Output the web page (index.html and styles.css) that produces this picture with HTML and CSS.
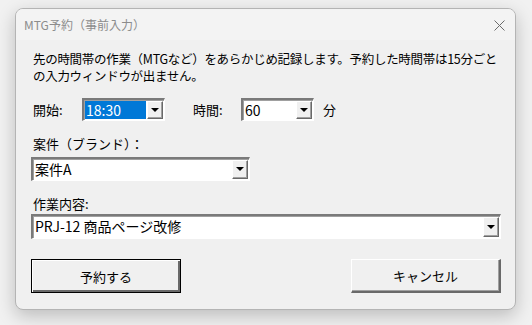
FILE: index.html
```html
<!DOCTYPE html>
<html lang="ja">
  <head>
    <meta charset="UTF-8">
    <title>MTG予約（事前入力）</title>
    <link rel="stylesheet" href="styles.css">
  </head>

  <body>
    <div class="window">
      <div class="titlebar">
        <span class="title">MTG予約（事前入力）</span>
        <svg class="close" width="11" height="11" viewBox="0 0 11 11">
          <path d="M0.5 0.5 L10.5 10.5 M10.5 0.5 L0.5 10.5" stroke="#6b6b6b" stroke-width="1" fill="none"/>
        </svg>
      </div>
      <div class="content">
        <p class="desc">先の時間帯の作業（MTGなど）をあらかじめ記録します。予約した時間帯は15分ごとの入力ウィンドウが出ません。</p>

        <div class="time-row">
          <span class="label start-label">開始:</span>
          <div class="combo combo-start">
            <span class="combo-text selected">18:30</span>
            <span class="drop"><i class="arrow"></i></span>
          </div>
          <span class="label dur-label">時間:</span>
          <div class="combo combo-dur">
            <span class="combo-text">60</span>
            <span class="drop"><i class="arrow"></i></span>
          </div>
          <span class="label unit">分</span>
        </div>

        <div class="label field-label">案件（ブランド）：</div>
        <div class="combo combo-brand">
          <span class="combo-text">案件A</span>
          <span class="drop"><i class="arrow"></i></span>
        </div>

        <div class="label field-label">作業内容:</div>
        <div class="combo combo-task">
          <span class="combo-text">PRJ-12 商品ページ改修</span>
          <span class="drop"><i class="arrow"></i></span>
        </div>

        <div class="buttons">
          <div class="btn btn-default">予約する</div>
          <div class="btn">キャンセル</div>
        </div>
      </div>
    </div>
  </body>
</html>
```

FILE: styles.css
```css
* {
  margin: 0;
  padding: 0;
  box-sizing: border-box;
}

body {
  width: 532px;
  height: 325px;
  overflow: hidden;
  background-color: #f1f1f1;
  padding: 8px 0 0 15px;
  font-family: "Noto Sans CJK JP", "Noto Sans", sans-serif;
  color: #000;
}

.window {
  width: 501px;
  height: 302px;
  border: 1px solid #b4b4b4;
  border-radius: 8px;
  background-color: #f0f0f0;
  box-shadow: 0 6px 18px rgba(0, 0, 0, 0.22);
  overflow: hidden;
  display: flex;
  flex-direction: column;
}

.titlebar {
  height: 31px;
  background-color: #f3f3f3;
  display: flex;
  align-items: center;
  justify-content: space-between;
  padding: 0 10px 0 8px;
}

.title {
  font-size: 12px;
  color: #8c8c8c;
}

.close {
  display: block;
  margin-top: 1px;
}

.content {
  padding: 10px 0 0 15px;
}

.label {
  font-size: 13px;
  line-height: 17px;
}

.desc {
  width: 470px;
  padding-left: 2px;
  font-size: 12.5px;
  line-height: 17px;
  letter-spacing: -0.3px;
}

.time-row {
  display: flex;
  align-items: center;
  margin-top: 14px;
  height: 23px;
}

.start-label {
  width: 51px;
  padding-left: 2px;
}

.dur-label {
  margin-left: 28px;
  width: 48px;
}

.unit {
  margin-left: 9px;
}

.combo {
  display: flex;
  height: 24px;
  background-color: #fff;
  border-style: solid;
  border-width: 2px 1px 1px 2px;
  border-color: #7a7a7a #ffffff #ffffff #7a7a7a;
  box-shadow: inset 1px 1px 0 #a0a0a0;
  padding: 1px;
}

.combo-start {
  width: 83px;
  height: 23px;
}

.combo-dur {
  width: 73px;
  height: 23px;
}

.combo-brand {
  width: 219px;
  margin-top: 5px;
}

.combo-task {
  width: 470px;
  margin-top: 2px;
  height: 25px;
}

.combo-text {
  flex: 1;
  font-size: 14px;
  line-height: 18px;
  padding-left: 1px;
  color: #000;
  white-space: nowrap;
}

.combo-text.selected {
  background-color: #0078d7;
  color: #fff;
  margin-right: 1px;
}

.drop {
  width: 16px;
  background-color: #f0f0f0;
  border-style: solid;
  border-width: 1px;
  border-color: #ffffff #696969 #696969 #ffffff;
  box-shadow: inset -1px -1px 0 #a0a0a0;
  display: flex;
  align-items: center;
  justify-content: center;
}

.arrow {
  display: block;
  width: 0;
  height: 0;
  border-left: 4px solid transparent;
  border-right: 4px solid transparent;
  border-top: 4px solid #000;
  margin-bottom: 1px;
}

.field-label {
  margin-top: 14px;
  padding-left: 2px;
}

.buttons {
  display: flex;
  justify-content: space-between;
  width: 470px;
  margin-top: 20px;
}

.btn {
  width: 150px;
  height: 34px;
  background-color: #f0f0f0;
  border-style: solid;
  border-width: 1px 2px 2px 1px;
  border-color: #ffffff #696969 #696969 #ffffff;
  box-shadow: inset -1px -1px 0 #a0a0a0;
  font-size: 13px;
  display: flex;
  align-items: center;
  justify-content: center;
}

.btn-default {
  border: 1px solid #000;
  box-shadow: inset 1px 1px 0 #ffffff, inset -2px -2px 0 #696969;
}
```
